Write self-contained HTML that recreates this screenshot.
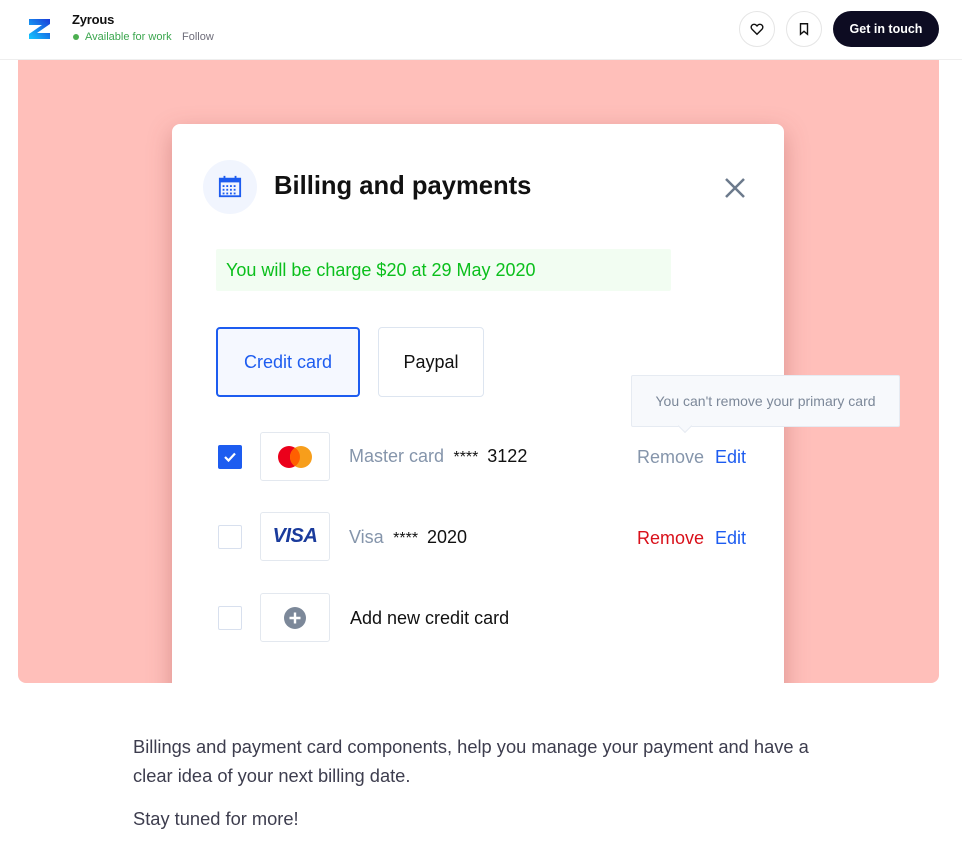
<!DOCTYPE html>
<html><head><style>
*{box-sizing:border-box;margin:0;padding:0}
body{width:962px;height:859px;background:#fff;font-family:"Liberation Sans",sans-serif;position:relative;overflow:hidden}
.a{position:absolute}
.hdr{top:0;left:0;width:962px;height:60px;border-bottom:1px solid #eee}
.circ{border:1px solid #e5e5e5;border-radius:50%;width:36px;height:36px;display:flex;align-items:center;justify-content:center}
.pink{left:18px;top:60px;width:921px;height:623px;background:#ffbfba;border-radius:0 0 8px 8px;overflow:hidden}
.card{left:154px;top:64px;width:612px;height:600px;background:#fff;border-radius:8px;box-shadow:0 8px 24px rgba(150,60,60,.35)}
.t{font-size:18px;white-space:nowrap}
.box{border:1px solid #e3e8ef;border-radius:3px;width:70px;height:49px;background:#fff;display:flex;align-items:center;justify-content:center}
.cb{width:24px;height:24px;border:1.5px solid #d8e0ee;border-radius:2px;background:#fff}
.st{color:#111;font-size:16px}
</style></head><body>
<div class="a hdr"></div>
<div class="a" style="left:28px;top:17px;width:24px;height:24px">
<svg width="24" height="24" viewBox="0 0 24 24"><defs><linearGradient id="g" x1="0" y1="1" x2="1" y2="0"><stop offset="0" stop-color="#14c8ff"/><stop offset="1" stop-color="#1a3ad8"/></linearGradient></defs><path d="M1 2h21v5L9 16h13v6H1v-5l13-9H1z" fill="url(#g)"/></svg></div>
<div class="a" style="left:72px;top:12px;font-size:13px;color:#111;font-weight:bold;letter-spacing:-.2px">Zyrous</div>
<div class="a" style="left:73px;top:34px;width:6px;height:6px;border-radius:50%;background:#4caf50"></div>
<div class="a" style="left:85px;top:31px;font-size:11px;color:#3ba64e">Available for work</div>
<div class="a" style="left:182px;top:31px;font-size:11px;color:#6e6d7a">Follow</div>
<div class="a circ" style="left:739px;top:11px"><svg width="14" height="14" viewBox="0 0 24 24" fill="none" stroke="#111" stroke-width="2.4"><path d="M12 21l-8.5-8.5a5 5 0 017.1-7.1L12 6.8l1.4-1.4a5 5 0 017.1 7.1z"/></svg></div>
<div class="a circ" style="left:786px;top:11px"><svg width="14" height="14" viewBox="0 0 24 24" fill="none" stroke="#111" stroke-width="2.4"><path d="M6 3h12v18l-6-5-6 5z"/></svg></div>
<div class="a" style="left:833px;top:11px;width:106px;height:36px;background:#0d0c22;border-radius:18px;color:#fff;font-size:12.5px;font-weight:bold;display:flex;align-items:center;justify-content:center">Get in touch</div>

<div class="a pink">
<div class="a card">
<div class="a" style="left:31px;top:36px;width:54px;height:54px;border-radius:50%;background:#f1f5fe;display:flex;align-items:center;justify-content:center">
<svg width="24" height="24" viewBox="0 0 26 26"><rect x="2" y="4" width="22" height="19" fill="none" stroke="#1d5cf0" stroke-width="2"/><rect x="2" y="4" width="22" height="4" fill="#1d5cf0"/><path d="M7 1v5M19 1v5" stroke="#1d5cf0" stroke-width="2"/><g fill="#1d5cf0"><rect x="5" y="11" width="2" height="2"/><rect x="9" y="11" width="2" height="2"/><rect x="13" y="11" width="2" height="2"/><rect x="17" y="11" width="2" height="2"/><rect x="5" y="15" width="2" height="2"/><rect x="9" y="15" width="2" height="2"/><rect x="13" y="15" width="2" height="2"/><rect x="17" y="15" width="2" height="2"/><rect x="5" y="19" width="2" height="2"/><rect x="9" y="19" width="2" height="2"/><rect x="13" y="19" width="2" height="2"/><rect x="17" y="19" width="2" height="2"/></g></svg></div>
<div class="a" style="left:102px;top:48px;font-size:25.6px;font-weight:bold;color:#111">Billing and payments</div>
<svg class="a" style="left:552px;top:53px" width="22" height="22" viewBox="0 0 22 22"><path d="M2 2l18 18M20 2L2 20" stroke="#6c7a8c" stroke-width="2.5"/></svg>
<div class="a" style="left:44px;top:125px;width:455px;height:42px;background:#f2fdf2;border-radius:2px"></div>
<div class="a t" style="left:54px;top:136px;color:#0bbf1c">You will be charge $20 at 29 May 2020</div>
<div class="a" style="left:44px;top:203px;width:144px;height:70px;border:2px solid #1d5cf0;border-radius:4px;background:#f5f8ff;color:#1d5cf0;font-size:18px;display:flex;align-items:center;justify-content:center">Credit card</div>
<div class="a" style="left:206px;top:203px;width:106px;height:70px;border:1.5px solid #dde5f0;border-radius:4px;color:#111;font-size:18px;display:flex;align-items:center;justify-content:center">Paypal</div>

<div class="a" style="left:46px;top:321px;width:24px;height:24px;background:#1d5cf0;border-radius:2px"><svg width="24" height="24"><path d="M7 12l3.5 3.5L17 8.5" stroke="#fff" stroke-width="2.2" fill="none"/></svg></div>
<div class="a box" style="left:88px;top:308px"><svg width="40" height="26"><circle cx="14" cy="13" r="11" fill="#eb001b"/><circle cx="26" cy="13" r="11" fill="#f79e1b"/><path d="M20 3.8a11 11 0 010 18.4a11 11 0 010-18.4z" fill="#ff5f00"/></svg></div>
<div class="a t" style="left:177px;top:322px;color:#8595ab">Master card <span class="st">&nbsp;****&nbsp;&nbsp;</span><span style="color:#111">3122</span></div>
<div class="a t" style="left:465px;top:323px;color:#8595ab">Remove</div>
<div class="a t" style="left:543px;top:323px;color:#1d5cf0">Edit</div>

<div class="a cb" style="left:46px;top:401px"></div>
<div class="a box" style="left:88px;top:388px"><span style="font-style:italic;font-weight:900;color:#1a3b9c;font-size:20px;letter-spacing:-.5px">VISA</span></div>
<div class="a t" style="left:177px;top:403px;color:#8595ab">Visa <span class="st">&nbsp;****&nbsp;&nbsp;</span><span style="color:#111">2020</span></div>
<div class="a t" style="left:465px;top:404px;color:#d9101a">Remove</div>
<div class="a t" style="left:543px;top:404px;color:#1d5cf0">Edit</div>

<div class="a cb" style="left:46px;top:482px"></div>
<div class="a box" style="left:88px;top:469px"><svg width="22" height="22"><circle cx="11" cy="11" r="11" fill="#7c8899"/><path d="M11 5.5v11M5.5 11h11" stroke="#fff" stroke-width="2.4"/></svg></div>
<div class="a t" style="left:178px;top:484px;color:#111">Add new credit card</div>
</div>
</div>
<div class="a" style="left:631px;top:375px;width:269px;height:52px;background:#f7f9fc;border:1px solid #e6ebf2;border-radius:2px;color:#7c8899;font-size:14px;display:flex;align-items:center;justify-content:center">You can't remove your primary card</div>
<div class="a" style="left:680px;top:421px;width:10px;height:10px;background:#f7f9fc;border-right:1px solid #e6ebf2;border-bottom:1px solid #e6ebf2;transform:rotate(45deg)"></div>

<div class="a" style="left:133px;top:732px;width:760px;font-size:18.3px;line-height:29px;color:#3d3d4e;white-space:nowrap">Billings and payment card components, help you manage your payment and have a<br>clear idea of your next billing date.</div>
<div class="a" style="left:133px;top:804px;font-size:18.3px;line-height:29px;color:#3d3d4e">Stay tuned for more!</div>
</body></html>
